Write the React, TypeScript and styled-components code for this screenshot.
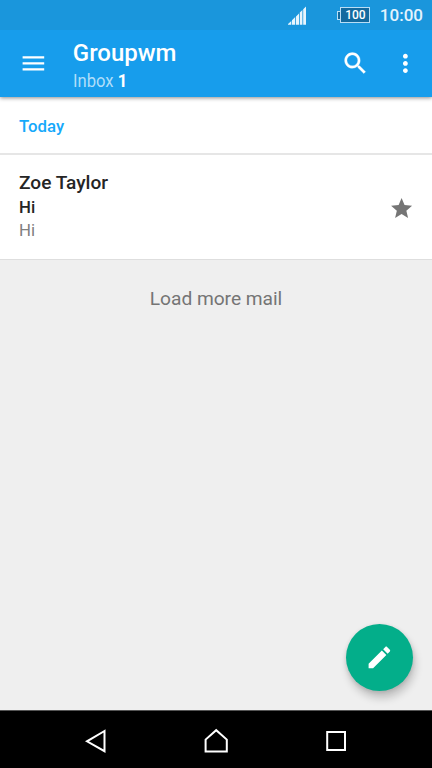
import React from 'react';
import styled, { createGlobalStyle } from 'styled-components';

const GlobalStyle = createGlobalStyle`
  * { box-sizing: border-box; }
  body { margin: 0; font-family: Roboto, sans-serif; }
`;

const Screen = styled.div`
  position: relative;
  display: flex;
  flex-direction: column;
  width: 432px;
  height: 768px;
  overflow: hidden;
  background: #efefef;
`;

const StatusBar = styled.div`
  position: relative;
  z-index: 1;
  display: flex;
  flex: none;
  align-items: flex-start;
  justify-content: flex-end;
  height: 30px;
  padding: 6px 9px 0 0;
  background: #1a96dc;
`;

const SignalIcon = styled.svg`
  display: block;
  margin-right: 31px;
`;

const Battery = styled.div`
  display: flex;
  align-items: center;
  margin: 1px 9.5px 0 0;
`;

const BatteryTip = styled.div`
  width: 3px;
  height: 9px;
  border: 1px solid #b9def5;
  border-right: 0;
  background: #136a9f;
`;

const BatteryBody = styled.div`
  width: 30px;
  height: 16px;
  border: 1px solid #b9def5;
  background: #136a9f;
  color: #fff;
  font-size: 12px;
  font-weight: 500;
  line-height: 15px;
  text-align: center;
`;

const Clock = styled.div`
  color: #e3f3fd;
  font-size: 17px;
  font-weight: 500;
  line-height: 19px;
`;

const AppBar = styled.header`
  position: relative;
  display: flex;
  flex: none;
  align-items: center;
  height: 67px;
  padding: 0 12px 0 19.4px;
  background: #179dec;
  box-shadow: 0 1px 4px rgba(0, 0, 0, 0.45);
`;

const BarIcon = styled.svg<{ $gap?: number }>`
  display: block;
  flex: none;
  margin-right: ${(p) => p.$gap ?? 0}px;
  fill: #fff;
`;

const Titles = styled.div`
  flex: 1;
  padding-top: 5px;
`;

const Title = styled.h1`
  margin: 0;
  color: #fff;
  font-size: 24px;
  font-weight: 500;
  line-height: 30px;
`;

const Folder = styled.div`
  width: max-content;
  color: #b0def9;
  font-size: 19.2px;
  font-weight: 400;
  line-height: 26px;
  transform: scaleX(0.865);
  transform-origin: left;

  b { color: #fff; font-weight: 700; }
`;

const SectionHeader = styled.h2`
  flex: none;
  height: 58px;
  margin: 0;
  padding: 0 19px;
  border-bottom: 2px solid #e6e6e6;
  background: #fff;
  color: #16a9fb;
  font-size: 16.8px;
  font-weight: 500;
  line-height: 58px;
`;

const MailRow = styled.article`
  display: flex;
  flex: none;
  align-items: center;
  justify-content: space-between;
  height: 105px;
  padding: 0 18px 0 19px;
  border-bottom: 1px solid #dedede;
  background: #fff;
`;

const MailText = styled.div`
  padding-bottom: 4px;
`;

const MailLine = styled.div<{ $size: number; $muted?: boolean; $height: number }>`
  color: ${(p) => (p.$muted ? '#808080' : '#252525')};
  font-size: ${(p) => p.$size}px;
  font-weight: ${(p) => (p.$muted ? 400 : 500)};
  line-height: ${(p) => p.$height}px;
`;

const StarIcon = styled.svg`
  display: block;
  margin-top: 3px;
  fill: #757575;
`;

const LoadMore = styled.button`
  flex: none;
  height: 78px;
  padding: 0;
  border: 0;
  background: none;
  color: #757575;
  font: 400 19.2px/78px Roboto, sans-serif;
  letter-spacing: -0.04px;
`;

const ComposeButton = styled.button`
  position: absolute;
  right: 19px;
  bottom: 77px;
  display: flex;
  align-items: center;
  justify-content: center;
  width: 67.2px;
  height: 67.2px;
  padding: 0;
  border: 0;
  border-radius: 50%;
  background: #03ae8a;
  box-shadow: 2px 7px 9px rgba(0, 0, 0, 0.2), 0 1px 4px rgba(0, 0, 0, 0.12);
`;

const NavBar = styled.nav`
  display: flex;
  flex: none;
  align-items: center;
  justify-content: space-between;
  height: 58px;
  margin-top: auto;
  padding: 3px 80px 0;
  border-top: 1px solid #555;
  background: #000;
`;

const NavIcon = styled.svg`
  display: block;
  fill: none;
  stroke: #fff;
  stroke-width: 2;
`;

export default function App() {
  return (
    <Screen>
      <GlobalStyle />
      <StatusBar>
        <SignalIcon width="19" height="19" viewBox="0 0 19 19" fill="#e8f5fd">
          <path d="M1 18.7V18L4.3 15V18.7ZM5 18.7V14.2L8.2 11V18.7ZM9 18.7V10.4L12 7.4V18.7ZM12.8 18.7V6.6L15.4 4V18.7ZM16.2 18.7V3.2L19 0.6V18.7Z" />
        </SignalIcon>
        <Battery>
          <BatteryTip />
          <BatteryBody>100</BatteryBody>
        </Battery>
        <Clock>10:00</Clock>
      </StatusBar>
      <AppBar>
        <BarIcon $gap={24.6} width="28.8" height="28.8" viewBox="0 0 24 24">
          <path d="M3 18h18v-2H3v2zm0-5h18v-2H3v2zm0-7v2h18V6H3z" />
        </BarIcon>
        <Titles>
          <Title>Groupwm</Title>
          <Folder>Inbox <b>1</b></Folder>
        </Titles>
        <BarIcon $gap={21.6} width="28.8" height="28.8" viewBox="0 0 24 24" stroke="#fff" strokeWidth="0.25">
          <path d="M15.5 14h-.79l-.28-.27C15.41 12.59 16 11.11 16 9.5 16 5.91 13.09 3 9.5 3S3 5.91 3 9.5 5.91 16 9.5 16c1.61 0 3.09-.59 4.23-1.57l.27.28v.79l5 4.99L20.49 19l-4.99-5zm-6 0C7.01 14 5 11.99 5 9.5S7.01 5 9.5 5 14 7.01 14 9.5 11.99 14 9.5 14z" />
        </BarIcon>
        <BarIcon width="28.8" height="28.8" viewBox="0 0 24 24">
          <path d="M12 8c1.1 0 2-.9 2-2s-.9-2-2-2-2 .9-2 2 .9 2 2 2zm0 2c-1.1 0-2 .9-2 2s.9 2 2 2 2-.9 2-2-.9-2-2-2zm0 6c-1.1 0-2 .9-2 2s.9 2 2 2 2-.9 2-2-.9-2-2-2z" />
        </BarIcon>
      </AppBar>
      <SectionHeader>Today</SectionHeader>
      <MailRow>
        <MailText>
          <MailLine $size={19.1} $height={23}>Zoe Taylor</MailLine>
          <MailLine $size={16.8} $height={27}>Hi</MailLine>
          <MailLine $size={16.8} $height={19} $muted>Hi</MailLine>
        </MailText>
        <StarIcon width="25.2" height="25.2" viewBox="0 0 24 24">
          <path d="M12 17.27L18.18 21l-1.64-7.03L22 9.24l-7.19-.61L12 2 9.19 8.63 2 9.24l5.46 4.73L5.82 21z" />
        </StarIcon>
      </MailRow>
      <LoadMore>Load more mail</LoadMore>
      <ComposeButton>
        <svg width="28.8" height="28.8" viewBox="0 0 24 24" fill="#fff">
          <path d="M3 17.25V21h3.75L17.81 9.94l-3.75-3.75L3 17.25zM20.71 7.04c.39-.39.39-1.02 0-1.41l-2.34-2.34c-.39-.39-1.02-.39-1.41 0l-1.83 1.83 3.75 3.75 1.83-1.83z" />
        </svg>
      </ComposeButton>
      <NavBar>
        <NavIcon width="32" height="32" viewBox="0 0 32 32">
          <path d="M24.5 6L7 16.3L24.5 26.2Z" />
        </NavIcon>
        <NavIcon width="32" height="32" viewBox="0 0 32 32">
          <path d="M5.6 26.5V14.6L16.2 5.2L26.8 14.6V26.5Z" />
        </NavIcon>
        <NavIcon width="32" height="32" viewBox="0 0 32 32">
          <path d="M7.2 7H25V25H7.2Z" />
        </NavIcon>
      </NavBar>
    </Screen>
  );
}
